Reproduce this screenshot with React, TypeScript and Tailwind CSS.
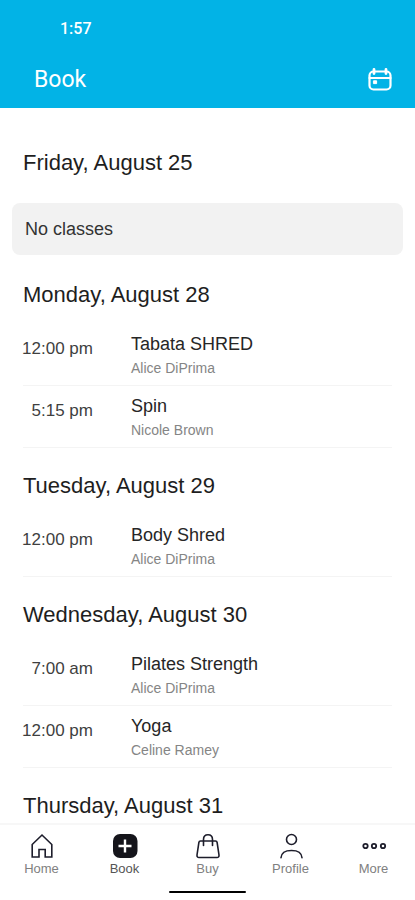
import React from "react";

type ClassItem = { time: string; title: string; teacher: string };
type Day = { date: string; classes?: ClassItem[] };

const days: Day[] = [
  { date: "Friday, August 25", classes: [] },
  {
    date: "Monday, August 28",
    classes: [
      { time: "12:00 pm", title: "Tabata SHRED", teacher: "Alice DiPrima" },
      { time: "5:15 pm", title: "Spin", teacher: "Nicole Brown" },
    ],
  },
  {
    date: "Tuesday, August 29",
    classes: [{ time: "12:00 pm", title: "Body Shred", teacher: "Alice DiPrima" }],
  },
  {
    date: "Wednesday, August 30",
    classes: [
      { time: "7:00 am", title: "Pilates Strength", teacher: "Alice DiPrima" },
      { time: "12:00 pm", title: "Yoga", teacher: "Celine Ramey" },
    ],
  },
  { date: "Thursday, August 31" },
];

const stroke = {
  fill: "none",
  stroke: "currentColor",
  strokeWidth: 1.6,
  strokeLinecap: "round" as const,
  strokeLinejoin: "round" as const,
};

function CalendarIcon() {
  return (
    <svg viewBox="0 0 26 26" className="size-[26px]" aria-hidden="true" {...stroke} strokeWidth={2.2}>
      <rect x="2.500" y="4.500" width="21" height="18" rx="4" />
      <path d="M2.500 11h21" />
      <path d="M7 2.500v4M19 2.500v4" strokeWidth="2.800" />
      <rect x="6.800" y="13.800" width="2.800" height="2.800" fill="currentColor" strokeWidth="1" />
    </svg>
  );
}

function HomeIcon() {
  return (
    <svg viewBox="0 0 26 26" className="size-[26px]" aria-hidden="true" {...stroke} strokeLinejoin="miter">
      <path d="M3.200 11.500 13 2l9.800 9.500V24h-6.600v-7.500H10V24H3.200z" />
    </svg>
  );
}

function BookIcon() {
  return (
    <svg viewBox="0 0 26 26" className="size-[26px]" aria-hidden="true">
      <rect x="1" y="1" width="24.500" height="24" rx="7" fill="#15151b" />
      <path d="M13 6.500v13M6.500 13h13" stroke="#fff" strokeWidth="2.400" />
    </svg>
  );
}

function BuyIcon() {
  return (
    <svg viewBox="0 0 26 26" className="size-[26px]" aria-hidden="true" {...stroke}>
      <path d="M5.500 8h15q1.400 0 1.600 1.400L24 22q.2 2.500-2 2.500H4q-2.200 0-2-2.500L3.900 9.400Q4.100 8 5.500 8z" />
      <path d="M8.500 12.500V6.500Q8.500 1.800 13 1.800t4.500 4.700v6" />
    </svg>
  );
}

function ProfileIcon() {
  return (
    <svg viewBox="0 0 26 26" className="size-[26px]" aria-hidden="true" {...stroke}>
      <circle cx="13.500" cy="6.500" r="5" />
      <path d="M3 24.800C3.500 19 7 17.500 13.500 17.500S23.500 19 24 24.800" />
    </svg>
  );
}

function MoreIcon() {
  return (
    <svg viewBox="0 0 26 26" className="size-[26px]" aria-hidden="true" {...stroke} strokeWidth={1.8}>
      <circle cx="4.500" cy="13" r="2.200" />
      <circle cx="13" cy="13" r="2.200" />
      <circle cx="22" cy="13" r="2.200" />
    </svg>
  );
}

const tabs = [
  { label: "Home", Icon: HomeIcon },
  { label: "Book", Icon: BookIcon },
  { label: "Buy", Icon: BuyIcon },
  { label: "Profile", Icon: ProfileIcon },
  { label: "More", Icon: MoreIcon },
];

function DaySection({ day }: { day: Day }) {
  return (
    <section>
      <h2 className="px-[23px] pt-6 pb-[15px] text-[22px] leading-7 text-[#1e1e1e]">{day.date}</h2>
      {day.classes?.length === 0 && (
        <p className="mx-3 mt-[11px] mb-[2px] rounded-lg bg-[#f2f2f2] px-[13px] py-[14px] text-[18px] leading-6 text-[#333]">
          No classes
        </p>
      )}
      {day.classes && day.classes.length > 0 && (
        <ul className="px-[23px]">
          {day.classes.map((c) => (
            <li key={c.time + c.title} className="flex h-[62px] border-b border-[#f4f4f4] pt-2">
              <time className="-ml-1 w-[74px] shrink-0 pt-[5px] text-right text-[17px] leading-6 text-[#3f3f3f]">
                {c.time}
              </time>
              <div className="ml-[38px] min-w-0">
                <h3 className="text-[18px] leading-6 text-[#262626]">{c.title}</h3>
                <p className="text-sm leading-6 text-[#858585]">{c.teacher}</p>
              </div>
            </li>
          ))}
        </ul>
      )}
    </section>
  );
}

export default function App() {
  return (
    <div className="flex h-screen flex-col bg-white font-['Liberation_Sans',Arial,sans-serif]">
      <header className="shrink-0 bg-[#02b3e6] pt-[17px] text-white">
        <div className="pl-[60px] font-['Roboto',sans-serif] text-base leading-6 font-medium">1:57</div>
        <div className="flex items-center justify-between pt-6 pr-[22px] pb-[13px] pl-[34px]">
          <h1 className="font-['Roboto',sans-serif] text-[23px] leading-[30px]">Book</h1>
          <button type="button" aria-label="Choose a date">
            <CalendarIcon />
          </button>
        </div>
      </header>
      <main className="min-h-0 flex-1 overflow-y-auto pt-[17px] [scrollbar-width:none]">
        {days.map((day) => (
          <DaySection key={day.date} day={day} />
        ))}
      </main>
      <nav className="shrink-0 border-t-2 border-[#f7f7f7] bg-white pt-2">
        <ul className="grid grid-cols-5">
          {tabs.map(({ label, Icon }) => (
            <li key={label}>
              <button type="button" className="flex w-full flex-col items-center text-[#1d1d2b]">
                <Icon />
                <span
                  className={
                    label === "Book" ? "text-[13px] leading-5 text-[#555]" : "text-[13px] leading-5 text-[#808080]"
                  }
                >
                  {label}
                </span>
              </button>
            </li>
          ))}
        </ul>
        <div className="mx-auto mt-[12px] mb-[7px] h-[2px] w-[77px] rounded-full bg-black" />
      </nav>
    </div>
  );
}
